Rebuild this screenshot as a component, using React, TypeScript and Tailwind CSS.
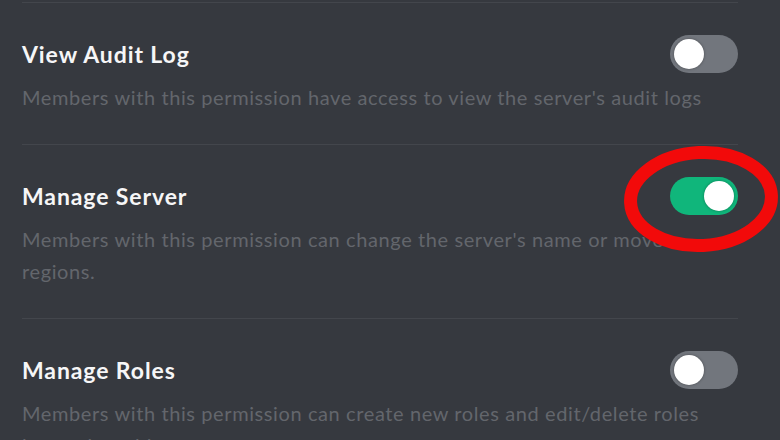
import { useState } from "react";

type Perm = {
  id: string;
  title: string;
  lines: string[];
  on: boolean;
};

const PERMS: Perm[] = [
  {
    id: "audit",
    title: "View Audit Log",
    lines: ["Members with this permission have access to view the server's audit logs"],
    on: false,
  },
  {
    id: "server",
    title: "Manage Server",
    lines: [
      "Members with this permission can change the server's name or move",
      "regions.",
    ],
    on: true,
  },
  {
    id: "roles",
    title: "Manage Roles",
    lines: [
      "Members with this permission can create new roles and edit/delete roles",
      "lower than this one.",
    ],
    on: false,
  },
];

function Toggle({ on, onClick }: { on: boolean; onClick: () => void }) {
  return (
    <button
      type="button"
      onClick={onClick}
      aria-pressed={on}
      className={
        on
          ? "flex h-[38px] w-[68px] shrink-0 items-center justify-end rounded-full bg-[#10b67b] px-[4px]"
          : "flex h-[38px] w-[68px] shrink-0 items-center justify-start rounded-full bg-[#72767d] px-[4px]"
      }
    >
      <span className="h-[30px] w-[30px] rounded-full bg-white shadow-[0_0_3px_rgba(0,0,0,0.35)]" />
    </button>
  );
}

export default function App() {
  const [state, setState] = useState<Record<string, boolean>>(
    Object.fromEntries(PERMS.map((p) => [p.id, p.on])),
  );

  return (
    <div
      className="relative h-[440px] w-[780px] overflow-hidden bg-[#36393f] pt-[2px]"
      style={{ fontFamily: "Lato, 'Noto Sans', sans-serif" }}
    >
      <div className="mx-[22px] w-[716px] border-t border-[#43464c]">
        {PERMS.map((p) => (
          <div key={p.id} className="border-b border-[#43464c] pb-[31px] pt-[32px]">
            <div className="flex items-center justify-between">
              <span className="text-[23px] font-bold tracking-[0.9px] text-[#f6f6f7]">
                {p.title}
              </span>
              <Toggle
                on={state[p.id]}
                onClick={() => setState((s) => ({ ...s, [p.id]: !s[p.id] }))}
              />
            </div>
            <div className="mt-[8px] text-[20px] leading-[32px] tracking-[0.6px] text-[#63666c]">
              {p.lines.map((l) => (
                <div key={l} className="whitespace-nowrap">
                  {l}
                </div>
              ))}
            </div>
          </div>
        ))}
      </div>

      {/* red annotation circle */}
      <svg
        className="pointer-events-none absolute left-0 top-0"
        width="780"
        height="440"
        viewBox="0 0 780 440"
      >
        <ellipse
          cx="701"
          cy="199"
          rx="70.5"
          ry="46.5"
          fill="none"
          stroke="#f20a0a"
          strokeWidth="13"
          transform="rotate(-3 701 199)"
        />
      </svg>
    </div>
  );
}
